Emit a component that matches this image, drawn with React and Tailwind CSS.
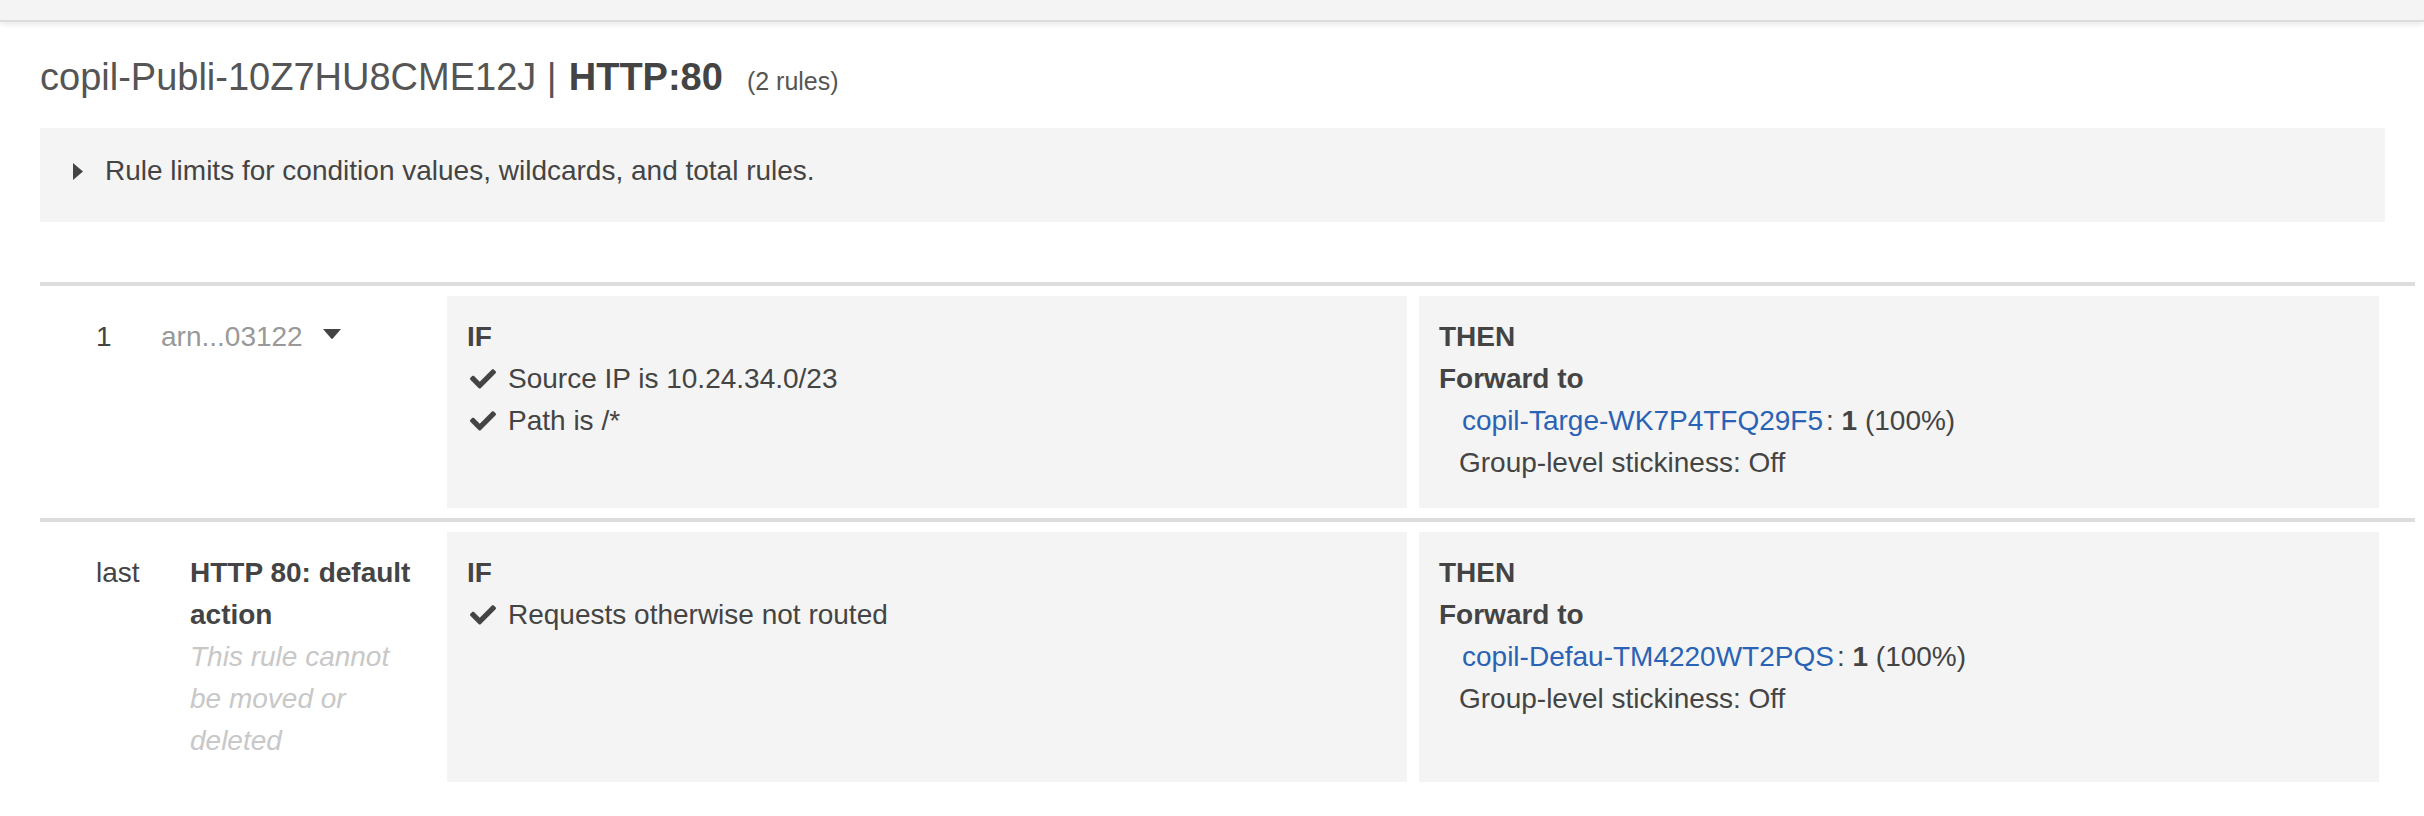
import React from 'react';

const FONT = { fontFamily: '"Liberation Sans", Arial, Helvetica, sans-serif' };

function CheckIcon() {
  return (
    <svg width="26" height="20" viewBox="0 64 512 390" className="shrink-0">
      <path
        d="M173.898 439.404l-166.4-166.4c-9.997-9.997-9.997-26.206 0-36.204l36.203-36.204c9.997-9.998 26.207-9.998 36.204 0L192 312.69 432.095 72.596c9.997-9.997 26.207-9.997 36.204 0l36.203 36.204c9.997 9.997 9.997 26.206 0 36.204l-294.4 294.401c-9.998 9.997-26.207 9.997-36.204-.001z"
        fill="#444444"
      />
    </svg>
  );
}

function Cond({ children }) {
  return (
    <div className="flex items-center pl-[3px]">
      <CheckIcon />
      <span className="ml-[12px]">{children}</span>
    </div>
  );
}

function IfPanel({ conds }) {
  return (
    <div className="w-[960px] shrink-0 bg-[#f4f4f4] p-5">
      <div className="font-bold">IF</div>
      {conds.map(c => (
        <Cond key={c}>{c}</Cond>
      ))}
    </div>
  );
}

function ThenPanel({ target }) {
  return (
    <div className="w-[960px] shrink-0 bg-[#f4f4f4] px-5 pt-5 pb-[24px]">
      <div className="font-bold">THEN</div>
      <div className="font-bold">Forward to</div>
      <div className="pl-5">
        <div>
          <a className="pl-[3px] text-[#2a62b5]">{target}</a>
          <span className="ml-[3px]">: </span>
          <b>1</b> (100%)
        </div>
        <div>Group-level stickiness: Off</div>
      </div>
    </div>
  );
}

function Row({ left, conds, target }) {
  return (
    <div className="mr-[9px] flex border-t-4 border-[#dddddd] py-[10px]">
      <div className="w-[407px] shrink-0 pl-[56px] py-5">{left}</div>
      <div className="flex gap-3">
        <IfPanel conds={conds} />
        <ThenPanel target={target} />
      </div>
    </div>
  );
}

export default function App() {
  return (
    <div className="min-h-[816px] bg-white text-[28px] leading-[42px] text-[#444444]" style={FONT}>
      {/* top bar */}
      <div className="h-[22px] border-b-2 border-[#dddddd] bg-[#f4f4f4] shadow-[0_3px_5px_rgba(0,0,0,0.08)]" />

      <div className="pl-10">
        {/* title */}
        <div className="mt-[36px] flex h-[38px] items-baseline text-[38px] leading-[38px]">
          <span className="text-[#555555]">copil-Publi-10Z7HU8CME12J | </span>
          <span className="ml-[12px] font-bold text-[#444444]">HTTP:80</span>
          <span className="ml-[24px] text-[25px] text-[#555555]">(2 rules)</span>
        </div>

        {/* rule limits box */}
        <div className="mt-[32px] mr-[39px] flex items-center bg-[#f4f4f4] pt-[22px] pb-[30px] pl-[33px]">
          <svg width="10" height="17" viewBox="0 0 10 17" className="shrink-0">
            <path d="M0 0 L10 8.5 L0 17 Z" fill="#444444" />
          </svg>
          <span className="ml-[22px]">Rule limits for condition values, wildcards, and total rules.</span>
        </div>

        <div className="mt-[60px]">
          <Row
            left={
              <div className="flex">
                <span className="w-[65px] shrink-0">1</span>
                <span className="flex items-center text-[#999999]">
                  arn...03122
                  <svg width="18" height="10" viewBox="0 0 18 10" className="ml-[20px] -mt-[6px]">
                    <path d="M0 0 L18 0 L9.8 9.6 Q9 10.3 8.2 9.6 Z" fill="#444444" />
                  </svg>
                </span>
              </div>
            }
            conds={['Source IP is 10.24.34.0/23', 'Path is /*']}
            target="copil-Targe-WK7P4TFQ29F5"
          />
          <Row
            left={
              <div className="flex">
                <span className="w-[94px] shrink-0">last</span>
                <div className="w-[235px]">
                  <div className="font-bold">HTTP 80: default action</div>
                  <div className="italic text-[#c8c8c8]">This rule cannot be moved or deleted</div>
                </div>
              </div>
            }
            conds={['Requests otherwise not routed']}
            target="copil-Defau-TM4220WT2PQS"
          />
        </div>
      </div>
    </div>
  );
}
